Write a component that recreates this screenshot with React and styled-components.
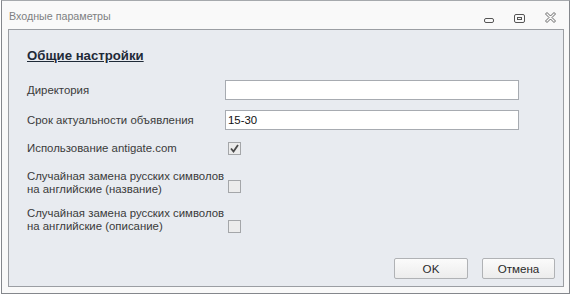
import React from "react";
import styled, { createGlobalStyle } from "styled-components";

const Global = createGlobalStyle`
  html, body { margin: 0; padding: 0; background: #ffffff; }
  body { font-family: "Liberation Sans", Arial, sans-serif; }
`;

const Window = styled.div`
  box-sizing: border-box;
  margin-left: 1px;
  width: 569px;
  height: 294px;
  border: 1px solid #84878c;
  border-top-color: #a6a9ad;
  background: #f9f9f9;
  display: flex;
  flex-direction: column;
  padding: 0 5px 6px 6px;
`;

const TitleBar = styled.div`
  height: 28px;
  display: flex;
  align-items: center;
  justify-content: space-between;
`;

const Title = styled.div`
  font-size: 10.7px;
  color: #7d7f82;
  padding-left: 1px;
  padding-top: 2px;
`;

const Controls = styled.div`
  display: flex;
  align-items: center;
  gap: 19px;
  padding-right: 7px;
  padding-top: 5px;
`;

const CtlIcon = styled.svg`
  display: block;
  width: 12px;
  height: 12px;
`;

const Panel = styled.div`
  flex: 1;
  box-sizing: border-box;
  border: 1px solid #9b9ea3;
  background: #e8ebf0;
  padding: 18px 8px 7px 18px;
  display: flex;
  flex-direction: column;
`;

const Heading = styled.div`
  font-size: 13.2px;
  font-weight: bold;
  color: #1f2a38;
  text-decoration: underline;
  margin-bottom: 17px;
`;

const Row = styled.div`
  display: flex;
  align-items: ${(p) => (p.$top ? "flex-start" : "center")};
  margin-bottom: ${(p) => p.$gap}px;
`;

const Label = styled.div`
  width: 198px;
  flex: none;
  white-space: nowrap;
  font-size: 11.4px;
  line-height: 12.5px;
  color: #3a3a3a;
`;

const Input = styled.div`
  box-sizing: border-box;
  width: 294px;
  height: 20px;
  border: 1px solid #a7abb1;
  background: #ffffff;
  font-size: 11.4px;
  color: #111;
  padding: 3px 0 0 2px;
`;

const Check = styled.div`
  box-sizing: border-box;
  width: 13px;
  height: 13px;
  margin-left: 3px;
  margin-top: ${(p) => p.$mt || 0}px;
  border: 1px solid #a4a6a9;
  background: #ececec;
  display: flex;
  align-items: center;
  justify-content: center;
`;

const Spacer = styled.div`
  flex: 1;
`;

const Footer = styled.div`
  display: flex;
  justify-content: flex-end;
  gap: 14px;
`;

const Button = styled.div`
  box-sizing: border-box;
  width: ${(p) => p.$w}px;
  height: 21px;
  border: 1px solid #b0b2b5;
  border-radius: 2px;
  background: linear-gradient(#fbfbfb, #ececec);
  font-size: 11.6px;
  color: #2a2a2a;
  display: flex;
  align-items: center;
  justify-content: center;
`;

const Tick = () => (
  <svg width="9" height="9" viewBox="0 0 9 9">
    <path d="M1 4.5 L3.5 7.5 L8 1" fill="none" stroke="#4a4a4a" strokeWidth="1.8" />
  </svg>
);

export default function App() {
  return (
    <>
      <Global />
      <Window>
        <TitleBar>
          <Title>Входные параметры</Title>
          <Controls>
            <CtlIcon viewBox="0 0 12 12">
              <rect x="1.5" y="6.5" width="9" height="4" rx="1.5" fill="none" stroke="#555" />
            </CtlIcon>
            <CtlIcon viewBox="0 0 12 12">
              <rect x="0.5" y="2.5" width="10" height="8" rx="1.5" fill="none" stroke="#555" />
              <rect x="3.5" y="5.5" width="4" height="2" fill="none" stroke="#555" />
            </CtlIcon>
            <CtlIcon viewBox="0 0 12 12">
              <path
                d="M0.5 2 L2 0.5 L5.5 4 L9 0.5 L10.5 2 L7 5.5 L10.5 9 L9 10.5 L5.5 7 L2 10.5 L0.5 9 L4 5.5 Z"
                fill="none"
                stroke="#555"
                strokeWidth="0.9"
                strokeLinejoin="round"
              />
            </CtlIcon>
          </Controls>
        </TitleBar>
        <Panel>
          <Heading>Общие настройки</Heading>
          <Row $gap={10}>
            <Label>Директория</Label>
            <Input />
          </Row>
          <Row $gap={12}>
            <Label>Срок актуальности объявления</Label>
            <Input>15-30</Input>
          </Row>
          <Row $gap={15}>
            <Label>Использование antigate.com</Label>
            <Check>
              <Tick />
            </Check>
          </Row>
          <Row $gap={12} $top>
            <Label>
              Случайная замена русских символов
              <br />
              на английские (название)
            </Label>
            <Check $mt={10} />
          </Row>
          <Row $gap={0} $top>
            <Label>
              Случайная замена русских символов
              <br />
              на английские (описание)
            </Label>
            <Check $mt={13} />
          </Row>
          <Spacer />
          <Footer>
            <Button $w={74}>OK</Button>
            <Button $w={73}>Отмена</Button>
          </Footer>
        </Panel>
      </Window>
    </>
  );
}
